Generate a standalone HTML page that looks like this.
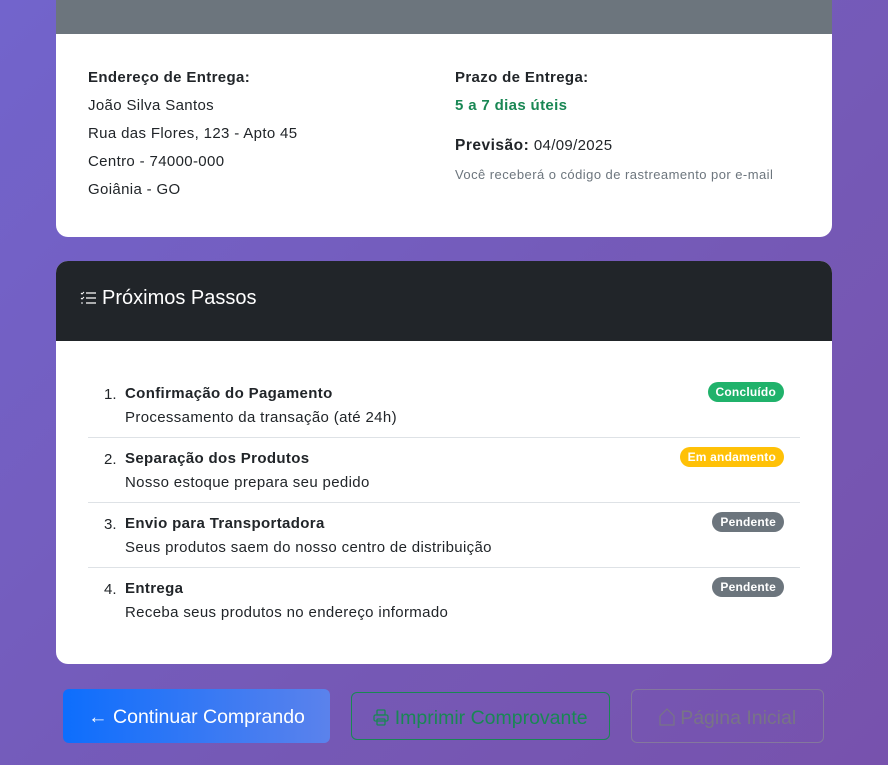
<!DOCTYPE html>
<html><head><meta charset="utf-8"><style>
*{box-sizing:border-box;margin:0;padding:0}
body{width:888px;height:765px;overflow:hidden;background:linear-gradient(135deg,#7264cc 0%,#7559b6 60%,#7752ad 100%);font-family:"Liberation Sans",sans-serif;color:#212529;position:relative}
.card{position:absolute;left:56px;width:776px;background:#fff;border-radius:12px;overflow:hidden}
.b{font-weight:bold;letter-spacing:.5px;font-size:15.5px}
.t{position:absolute;font-size:15px;white-space:nowrap;letter-spacing:.35px}
.n{position:absolute;left:48px;font-size:15px}
.badge{position:absolute;right:48px;height:20px;border-radius:10px;color:#fff;font-size:12px;font-weight:bold;line-height:20px;padding:0 8px;letter-spacing:.2px}
.sep{position:absolute;left:32px;right:32px;height:1px;background:#dee2e6}
.btn{position:absolute;top:689px;height:54px;border-radius:6px;font-size:19.5px;line-height:56px;text-align:center;white-space:nowrap}
</style></head><body>
<div class="card" style="top:-20px;height:257px">
 <div style="height:54px;background:#6c757d"></div>
 <div class="t b" style="left:32px;top:89px">Endereço de Entrega:</div>
 <div class="t" style="left:32px;top:117px">João Silva Santos</div>
 <div class="t" style="left:32px;top:145px">Rua das Flores, 123 - Apto 45</div>
 <div class="t" style="left:32px;top:173px">Centro - 74000-000</div>
 <div class="t" style="left:32px;top:201px">Goiânia - GO</div>
 <div class="t b" style="left:399px;top:89px">Prazo de Entrega:</div>
 <div class="t b" style="left:399px;top:117px;color:#198754">5 a 7 dias úteis</div>
 <div class="t" style="left:399px;top:157px"><span class="b">Previsão:</span> 04/09/2025</div>
 <div class="t" style="left:399px;top:187px;font-size:13px;letter-spacing:.45px;color:#6c757d">Você receberá o código de rastreamento por e-mail</div>
</div>
<div class="card" style="top:261px;height:403px">
 <div style="height:80px;background:#212529;color:#fff;font-size:20px;line-height:74px;padding-left:24px">
  <svg width="16" height="14" viewBox="0 0 16 14" style="vertical-align:-1px;margin-right:6px"><g stroke="#fff" stroke-width="1.3" fill="none"><path d="M6 2h10M6 7h10M6 12h10"/><path d="M1 2l1 1 2-2M1 7l1 1 2-2" stroke-width="1"/><path d="M1 12h2" stroke-width="1"/></g></svg>Próximos Passos</div>
 <div class="n" style="top:125px">1.</div><div class="t b" style="left:69px;top:124px">Confirmação do Pagamento</div>
 <div class="t" style="left:69px;top:148px">Processamento da transação (até 24h)</div>
 <div class="badge" style="top:121px;background:#20b26b">Concluído</div>
 <div class="sep" style="top:176px"></div>
 <div class="n" style="top:190px">2.</div><div class="t b" style="left:69px;top:189px">Separação dos Produtos</div>
 <div class="t" style="left:69px;top:213px">Nosso estoque prepara seu pedido</div>
 <div class="badge" style="top:186px;background:#ffc107">Em andamento</div>
 <div class="sep" style="top:241px"></div>
 <div class="n" style="top:255px">3.</div><div class="t b" style="left:69px;top:254px">Envio para Transportadora</div>
 <div class="t" style="left:69px;top:278px">Seus produtos saem do nosso centro de distribuição</div>
 <div class="badge" style="top:251px;background:#6c757d">Pendente</div>
 <div class="sep" style="top:306px"></div>
 <div class="n" style="top:320px">4.</div><div class="t b" style="left:69px;top:319px">Entrega</div>
 <div class="t" style="left:69px;top:343px">Receba seus produtos no endereço informado</div>
 <div class="badge" style="top:316px;background:#6c757d">Pendente</div>
</div>
<div class="btn" style="left:63px;width:267px;background:linear-gradient(90deg,#0d6efd,#5b82ec);color:#fff">← Continuar Comprando</div>
<div class="btn" style="left:351px;top:692px;height:48px;line-height:50px;width:259px;border:1px solid #198754;color:#198754">
 <svg width="16" height="17" viewBox="0 0 16 17" style="vertical-align:-2px"><g fill="none" stroke="#198754" stroke-width="1.3"><rect x="4" y="1" width="8" height="5" rx="1"/><rect x="1" y="6" width="14" height="6" rx="1.5"/><rect x="4" y="10" width="8" height="6" rx="1"/></g></svg> Imprimir Comprovante</div>
<div class="btn" style="left:631px;width:193px;border:1px solid #84779e;color:#787486">
 <svg width="16" height="18" viewBox="0 0 16 18" style="vertical-align:-2px"><path d="M1 8L8 1l7 7v9H1z" fill="none" stroke="#787486" stroke-width="1.2"/></svg> Página Inicial</div>
</body></html>
